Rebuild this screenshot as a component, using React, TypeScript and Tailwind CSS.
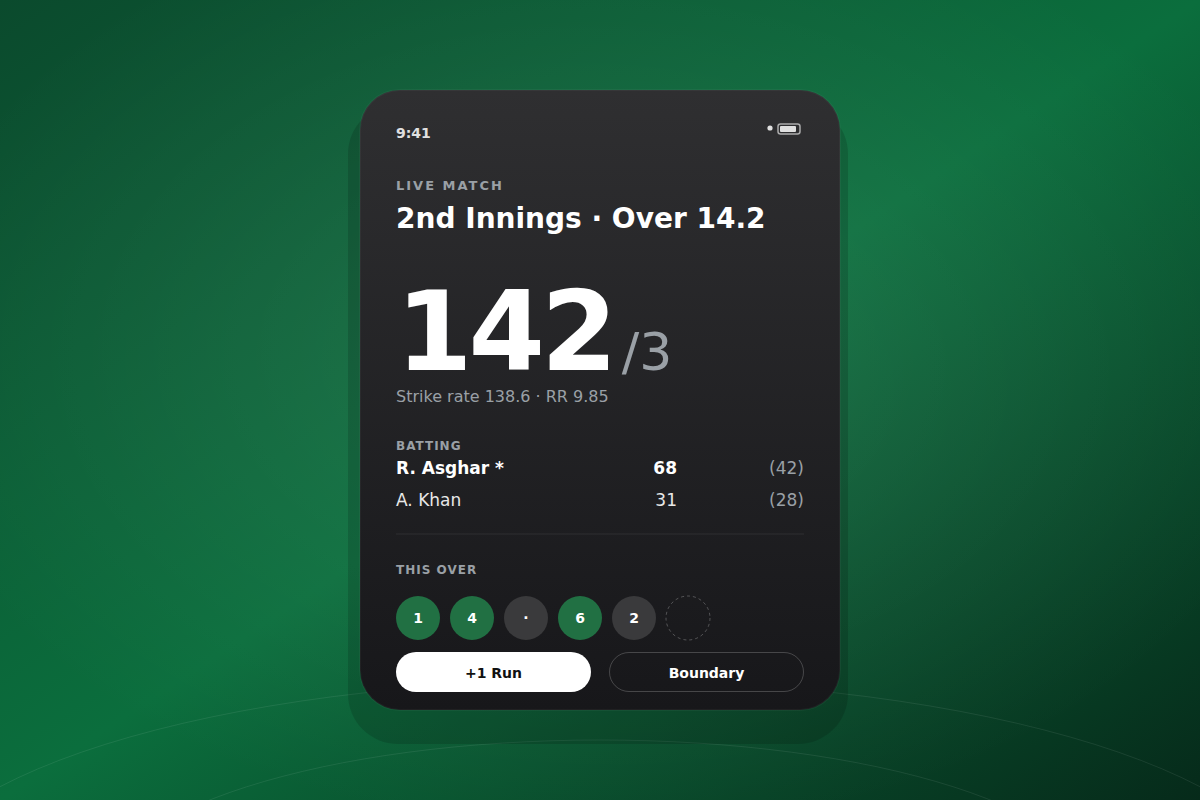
const batters = [
  { name: 'R. Asghar *', runs: 68, balls: 42, onStrike: true },
  { name: 'A. Khan', runs: 31, balls: 28, onStrike: false },
]

const balls = [
  { label: '1', scoring: true },
  { label: '4', scoring: true },
  { label: '·', scoring: false },
  { label: '6', scoring: true },
  { label: '2', scoring: false },
]

function StatusIcons() {
  return (
    <svg width="38" height="14" viewBox="0 0 38 14" fill="none" aria-hidden="true">
      <circle cx="4" cy="5" r="2.6" fill="#e0e0e0" />
      <rect x="12" y="1" width="22" height="10" rx="2.5" stroke="#e0e0e0" strokeOpacity="0.7" strokeWidth="1.5" />
      <rect x="14" y="3" width="16" height="6" rx="1" fill="#e0e0e0" />
    </svg>
  )
}

// boundary rope rings behind the card
function FieldRings() {
  return (
    <svg
      className="absolute inset-0 h-full w-full"
      viewBox="0 0 1200 800"
      preserveAspectRatio="xMidYMax slice"
      fill="none"
      stroke="#fff"
      strokeOpacity="0.08"
      aria-hidden="true"
    >
      <ellipse cx="600" cy="900" rx="700" ry="220" />
      <ellipse cx="600" cy="900" rx="500" ry="160" />
    </svg>
  )
}

export default function App() {
  return (
    <div className="relative flex min-h-screen items-center justify-center overflow-hidden bg-[radial-gradient(ellipse_60%_60%_at_50%_45%,rgba(255,255,255,0.09),transparent),linear-gradient(to_bottom_right,#0b4a2d,#0b6e3d_50%,#062a1a)] py-20 font-['DejaVu_Sans',sans-serif]">
      <FieldRings />

      <main className="relative w-full max-w-[480px] rounded-[40px] border border-white/4 bg-linear-to-b from-[#2f2f31] to-[#17171a] bg-origin-border px-[35px] pt-8 pb-[17px] text-white shadow-[-2px_24px_0_10px_rgba(0,0,0,0.14)] ring-1 ring-white/4">
        {/* STATUS BAR */}
        <div className="flex items-start justify-between">
          <span className="text-sm leading-5 font-bold text-[#e0e0e0]">9:41</span>
          <StatusIcons />
        </div>

        {/* MATCH */}
        <p className="mt-8 text-[13px] leading-[22px] font-bold tracking-[2px] text-[#9aa0a6]">LIVE MATCH</p>
        <h1 className="mt-1 text-[28px] leading-9 font-bold">2nd Innings · Over 14.2</h1>

        {/* SCORE */}
        <div className="mt-14 flex items-baseline gap-2">
          <span className="text-[110px] leading-[78px] font-bold tracking-[-4px]">142</span>
          <span className="text-[52px] leading-10 text-[#9aa0a6]">/3</span>
        </div>
        <p className="mt-[11px] text-base leading-7 text-[#9aa0a6]">Strike rate 138.6 · RR 9.85</p>

        {/* BATTING */}
        <h2 id="batting" className="mt-[30px] text-xs leading-[11px] font-bold tracking-[1px] text-[#9aa0a6]">
          BATTING
        </h2>
        <table aria-labelledby="batting" className="w-full text-[17px] leading-8">
          <tbody>
            {batters.map((b) => (
              <tr key={b.name} className={b.onStrike ? 'font-bold' : 'text-[#e8e8e8]'}>
                <td>{b.name}</td>
                <td className="text-right">{b.runs}</td>
                <td className="w-[127px] text-right font-normal text-[#9aa0a6]">({b.balls})</td>
              </tr>
            ))}
          </tbody>
        </table>

        <hr className="mt-[17px] border-t-2 border-white/4" />

        {/* THIS OVER */}
        <h2 className="mt-[30px] text-xs leading-[11px] font-bold tracking-[1px] text-[#9aa0a6]">THIS OVER</h2>
        <div className="mt-5 flex gap-2.5">
          {balls.map((ball) => (
            <span
              key={ball.label}
              className={`flex size-11 items-center justify-center rounded-full text-sm font-bold ${
                ball.scoring ? 'bg-[#217043]' : 'bg-[#3a3a3c]'
              }`}
            >
              {ball.label}
            </span>
          ))}
          <svg className="size-11 overflow-visible" viewBox="0 0 44 44" fill="none" aria-hidden="true">
            <circle cx="22" cy="22" r="22" stroke="#fff" strokeOpacity="0.25" strokeDasharray="3 3" />
          </svg>
        </div>

        {/* ACTIONS */}
        <div className="mt-3 grid grid-cols-2 gap-[18px]">
          <button className="h-10 rounded-full bg-white pt-0.5 text-sm font-bold text-[#111]">+1 Run</button>
          <button className="h-10 rounded-full border border-white/20 pt-0.5 text-sm font-bold">Boundary</button>
        </div>
      </main>
    </div>
  )
}
